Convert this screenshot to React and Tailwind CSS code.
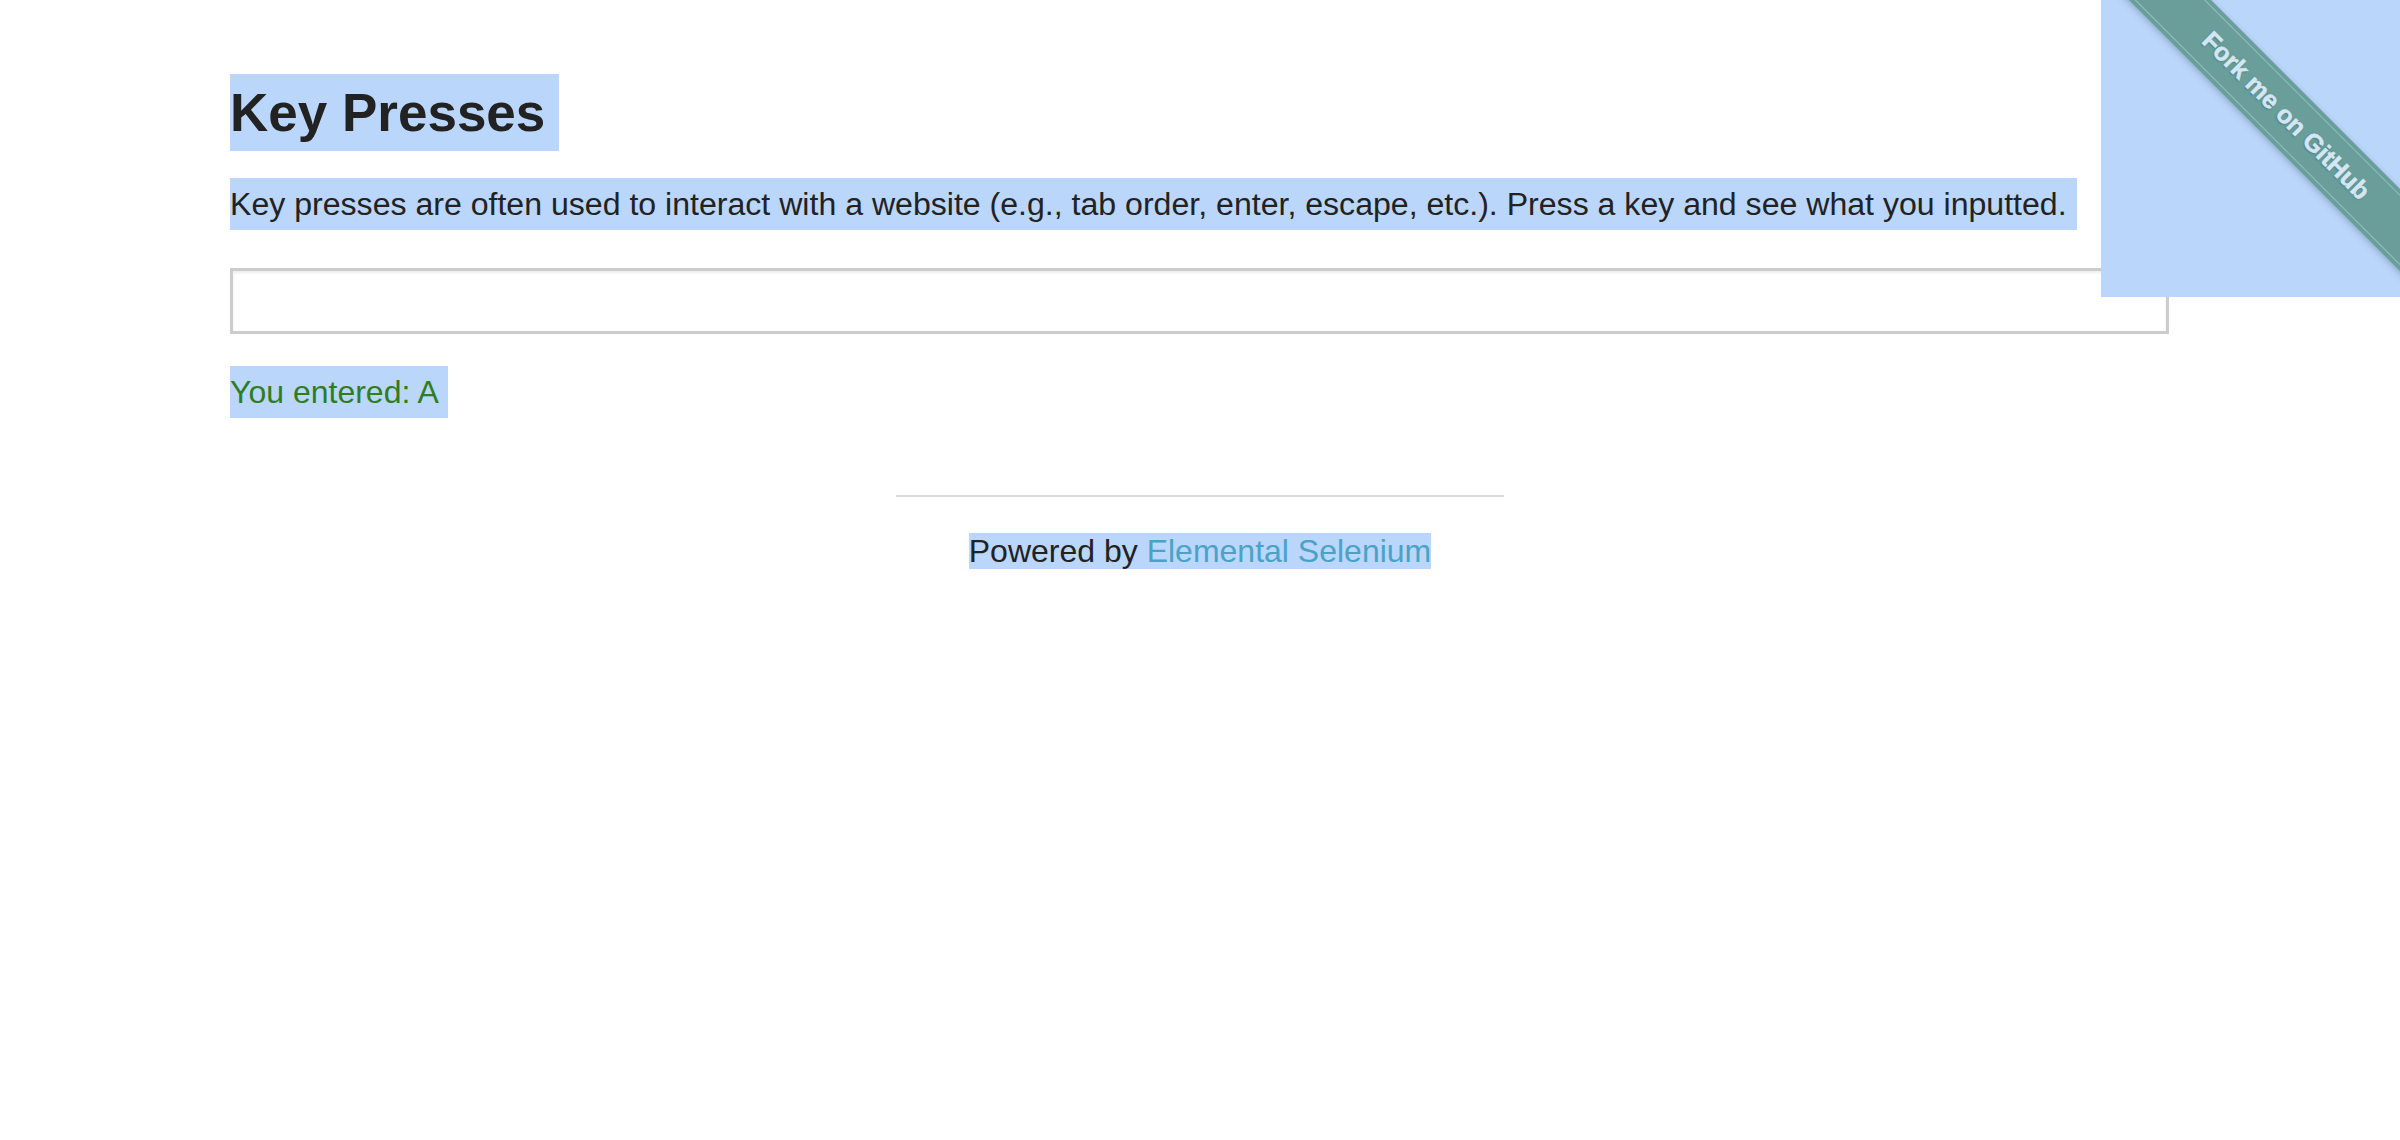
import React, { useState } from 'react';

const ForkRibbon = () => (
    <a
        href="#"
        className="absolute top-0 right-0 block w-[299px] h-[297px] overflow-hidden bg-[#bad6fb]"
    >
        <div className="absolute left-[-30px] top-[87px] w-[430px] h-[58px] rotate-45 bg-[#699e9a] shadow-[0_2px_6px_rgba(60,90,110,0.35)] flex items-center">
            <div className="w-full h-[50px] border-y border-[#93c3c0] flex items-center justify-center">
                <span className="font-['Liberation_Sans',Arial,sans-serif] font-bold text-[25px] text-[#d3e6f4] [-webkit-text-stroke:0.6px_#d3e6f4] [text-shadow:0_1px_2px_rgba(40,70,70,0.5)]">
                    Fork me on GitHub
                </span>
            </div>
        </div>
    </a>
);

export default function App() {
    const [entered, setEntered] = useState('A');

    return (
        <div className="relative min-h-[1140px] bg-white font-['Liberation_Sans',Arial,sans-serif] text-[#222222]">
            <ForkRibbon />

            <div className="pt-[74px] pl-[230px] w-[2169px]">
                <h3 className="text-[53px] font-bold leading-[77px]">
                    <span className="inline-block bg-[#bad6fb] pr-[14px]">Key Presses</span>
                </h3>

                <p className="mt-[27px] text-[32.1px] leading-[52px]">
                    <span className="inline-block bg-[#bad6fb] pr-[10px]">
                        Key presses are often used to interact with a website (e.g., tab order, enter, escape, etc.). Press a key and see what you inputted.
                    </span>
                </p>

                <input
                    type="text"
                    onKeyDown={(e) => setEntered(e.key.toUpperCase())}
                    className="block mt-[38px] w-full h-[66px] border-[3px] border-[#cccccc] bg-white shadow-[inset_0_2px_3px_rgba(0,0,0,0.08)] outline-none px-3 text-[28px]"
                />

                <p className="mt-[32px] text-[32px] leading-[52px] text-[#2f7d1e]">
                    <span className="inline-block bg-[#bad6fb] pr-[9px]">You entered: {entered}</span>
                </p>
            </div>

            <div className="flex flex-col items-center mt-[77px]">
                <hr className="w-[608px] border-t-2 border-[#dddddd]" />
                <div className="mt-[36px] text-[32px] leading-[37px]">
                    <span className="bg-[#bad6fb]">
                        Powered by <a href="#" className="text-[#4aa3c6]">Elemental Selenium</a>
                    </span>
                </div>
            </div>
        </div>
    );
}
